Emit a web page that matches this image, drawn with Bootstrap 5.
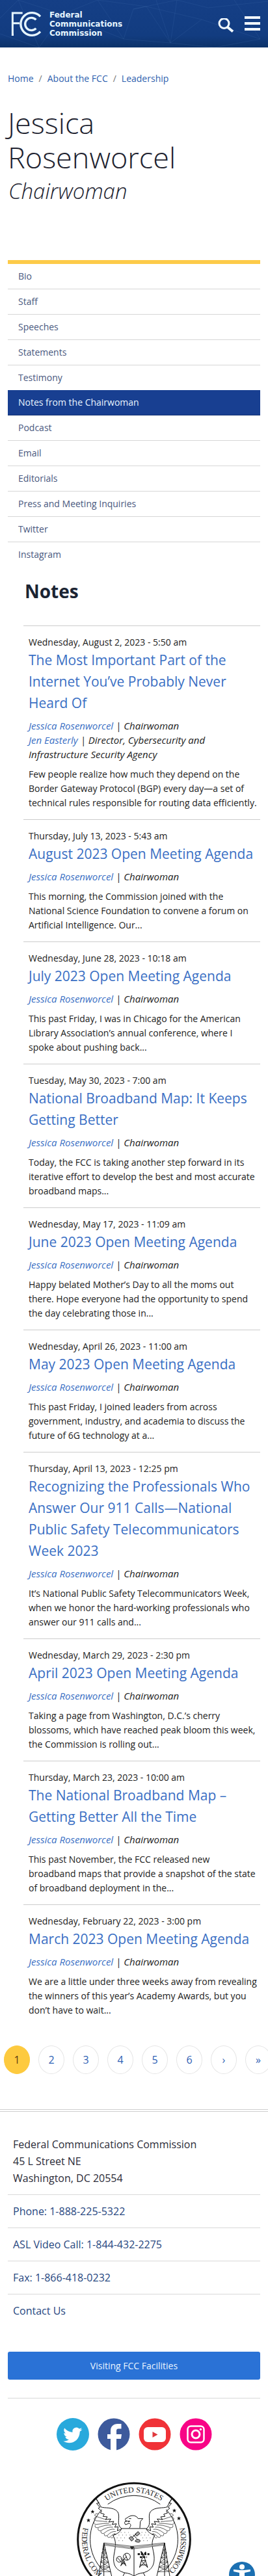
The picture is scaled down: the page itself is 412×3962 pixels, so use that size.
<!DOCTYPE html>
<html lang="en">
<head>
<meta charset="utf-8">
<meta name="viewport" content="width=device-width, initial-scale=1">
<title>Notes from the Chairwoman | Federal Communications Commission</title>
<link href="https://cdn.jsdelivr.net/npm/bootstrap@5.3.0/dist/css/bootstrap.min.css" rel="stylesheet">
<style>
body { font-family: "Open Sans", "Noto Sans", sans-serif; font-size: 14px; line-height: 22px; color: #212121; overflow-x: hidden; }
a { color: #3a6fc4; text-decoration: none; }
.site-header { height: 73px; background: linear-gradient(#153f86 0, #123c80 75%, #0c3269 100%); overflow: hidden; }
.header-web { inset: 0; width: 100%; height: 100%; }
.site-name { font: bold 12px/14px "DejaVu Sans", sans-serif; color: #e6f6ff; }
.icon-btn { border: 0; background: none; padding: 0; line-height: 0; }
.crumbs { font-size: 14px; padding-top: 37px; }
.crumbs a { color: #2f5fae; }
.crumbs li + li::before { content: "/"; color: #777; padding: 0 8px; }
h1 { font-weight: 300; font-size: 45px; line-height: 53px; color: #20222f; margin: 30px 0 0; }
.role { font-weight: 300; font-style: italic; font-size: 33px; line-height: 44px; color: #20222f; margin: 4px 0 84px; padding-left: 1px; }
.side-nav { border-top: 6px solid #fdcb49; }
.side-nav a { display: block; padding: 8px 16px; border-bottom: 1px solid #d6d6d6; color: #49587e; }
.side-nav li:last-child a { border-bottom-color: transparent; }
.side-nav a.before-active { border-bottom: 0; }
.side-nav a.active { background: #183f91; border-bottom-color: #123072; color: #e8f4ff; }
.notes { margin-left: 24px; }
.notes h2 { font-weight: 700; font-size: 28px; line-height: 38px; color: #1b2433; margin: 17px 0 34px; padding-left: 2px; }
.note { border-top: 1px solid #ccc; padding: 14px 5px 14px 8px; }
.note h3 { font-weight: 400; font-size: 21px; line-height: 33px; margin: 0 0 7px; }
.note .byline { font-style: italic; font-size: 15px; margin: 0 0 9px; }
.note .teaser { margin: 0; }
.pager { gap: 13px; padding-left: 6px; margin: 29px 0 54px; }
.pager .page-item .page-link { width: 40px; height: 44px; margin-left: 0; border-radius: 50%; border: 1px solid #e6e6e6; padding: 0; font-size: 16px; line-height: 42px; text-align: center; color: #2f62b5; }
.pager .active .page-link { background: #fdca3f; border-color: #fdca3f; color: #5b3b12; }
.site-footer { border-top: 4px double #cfcfcf; font-size: 16px; line-height: 26px; padding-top: 37px; }
.contact > * { border-bottom: 1px solid #d9d9d9; padding: 12px 8px; }
.contact > :first-child { padding-top: 0; }
.contact > :last-child { border-bottom: 0; }
.contact a { color: #27477f; display: block; }
.contact address { margin: 0; color: #2c2c38; }
.btn-visit { background: #2a72d6; border: 0; border-radius: 3px; color: #e8f4ff; font-size: 14px; line-height: 23px; padding: 10px; margin-top: 38px; }
.social { border-top: 1px solid #d9d9d9; margin-top: 28px; padding-top: 30px; gap: 13px; line-height: 0; }
.seal { margin-top: 48px; line-height: 0; }
.a11y { right: 20px; bottom: -18px; }
</style>
</head>
<body>
<header class="site-header position-relative">
  <svg class="header-web position-absolute" viewBox="0 0 412 73" preserveAspectRatio="none" fill="none" stroke="#4f7bb8" stroke-opacity=".18" aria-hidden="true">
    <path d="M0 28 28 0 96 22 60 73M28 0 60 73 0 52M96 22 190 60 150 0 96 22M190 60 205 14 272 0 262 66 225 10 310 30 262 66 330 73M190 60 262 66M272 0 320 12 412 2M310 30 400 60 330 73M360 0 400 60M205 14 225 10 150 0M262 66 240 0"/>
  </svg>
  <div class="position-relative d-flex align-items-start ps-3 pe-2 h-100">
    <a href="#" class="d-flex" aria-label="FCC home">
      <svg class="mt-3" width="48" height="42" viewBox="48 48 144 126" fill="none" stroke="#e6f6ff" stroke-width="10" aria-hidden="true">
        <path d="M58 165V60H104M58 107H90" stroke-width="9"/><path d="M53 165 63 153V165Z" fill="#e6f6ff" stroke="none"/>
        <path d="M186 76A52 52 0 1 0 186 146"/><path d="M166 91A29 29 0 1 0 166 131"/>
      </svg>
      <span class="site-name d-block mt-3 ms-2 ps-1">Federal<br>Communications<br>Commission</span>
    </a>
    <button class="icon-btn ms-auto mt-4" type="button" aria-label="Search">
      <svg class="mt-1" width="26" height="26" viewBox="0 0 26 26" fill="none" stroke="#f2faff"><circle cx="10.500" cy="8" r="7.500" stroke-width="3"/><path d="M15.500 13.500 24 20.500" stroke-width="4"/></svg>
    </button>
    <button class="icon-btn ms-3 mt-4 me-1" type="button" aria-label="Menu">
      <svg width="24" height="24" viewBox="0 0 24 24" fill="#f2faff"><path d="M0 1h24v4H0zM0 10h24v4H0zM0 19h24v4H0z"/></svg>
    </button>
  </div>
</header>

<main>
  <div class="container-fluid">
    <nav aria-label="Breadcrumb"><ol class="crumbs list-unstyled d-flex m-0">
      <li><a href="#">Home</a></li><li><a href="#">About the FCC</a></li><li><a href="#">Leadership</a></li>
    </ol></nav>
    <h1>Jessica Rosenworcel</h1>
    <p class="role">Chairwoman</p>

    <nav aria-label="Chairwoman">
      <ul class="side-nav list-unstyled m-0">
        <li><a href="#">Bio</a></li>
        <li><a href="#">Staff</a></li>
        <li><a href="#">Speeches</a></li>
        <li><a href="#">Statements</a></li>
        <li><a href="#" class="before-active">Testimony</a></li>
        <li><a href="#" class="active" aria-current="page">Notes from the Chairwoman</a></li>
        <li><a href="#">Podcast</a></li>
        <li><a href="#">Email</a></li>
        <li><a href="#">Editorials</a></li>
        <li><a href="#">Press and Meeting Inquiries</a></li>
        <li><a href="#">Twitter</a></li>
        <li><a href="#">Instagram</a></li>
      </ul>
    </nav>

    <section class="notes">
      <h2>Notes</h2>
      <article class="note"><time>Wednesday, August 2, 2023 - 5:50 am</time>
        <h3><a href="#">The Most Important Part of the Internet You’ve Probably Never Heard Of</a></h3>
        <p class="byline"><a href="#">Jessica Rosenworcel</a> | Chairwoman<br><a href="#">Jen Easterly</a> | Director, Cybersecurity and Infrastructure Security Agency</p>
        <p class="teaser">Few people realize how much they depend on the Border Gateway Protocol (BGP) every day—a set of technical rules responsible for routing data efficiently.</p></article>
      <article class="note"><time>Thursday, July 13, 2023 - 5:43 am</time>
        <h3><a href="#">August 2023 Open Meeting Agenda</a></h3>
        <p class="byline"><a href="#">Jessica Rosenworcel</a> | Chairwoman</p>
        <p class="teaser">This morning, the Commission joined with the National Science Foundation to convene a forum on Artificial Intelligence. Our...</p></article>
      <article class="note"><time>Wednesday, June 28, 2023 - 10:18 am</time>
        <h3><a href="#">July 2023 Open Meeting Agenda</a></h3>
        <p class="byline"><a href="#">Jessica Rosenworcel</a> | Chairwoman</p>
        <p class="teaser">This past Friday, I was in Chicago for the American Library Association’s annual conference, where I spoke about pushing back...</p></article>
      <article class="note"><time>Tuesday, May 30, 2023 - 7:00 am</time>
        <h3><a href="#">National Broadband Map: It Keeps Getting Better</a></h3>
        <p class="byline"><a href="#">Jessica Rosenworcel</a> | Chairwoman</p>
        <p class="teaser">Today, the FCC is taking another step forward in its iterative effort to develop the best and most accurate broadband maps...</p></article>
      <article class="note"><time>Wednesday, May 17, 2023 - 11:09 am</time>
        <h3><a href="#">June 2023 Open Meeting Agenda</a></h3>
        <p class="byline"><a href="#">Jessica Rosenworcel</a> | Chairwoman</p>
        <p class="teaser">Happy belated Mother’s Day to all the moms out there. Hope everyone had the opportunity to spend the day celebrating those in...</p></article>
      <article class="note"><time>Wednesday, April 26, 2023 - 11:00 am</time>
        <h3><a href="#">May 2023 Open Meeting Agenda</a></h3>
        <p class="byline"><a href="#">Jessica Rosenworcel</a> | Chairwoman</p>
        <p class="teaser">This past Friday, I joined leaders from across government, industry, and academia to discuss the future of 6G technology at a...</p></article>
      <article class="note"><time>Thursday, April 13, 2023 - 12:25 pm</time>
        <h3><a href="#">Recognizing the Professionals Who Answer Our 911 Calls—National Public Safety Telecommunicators Week 2023</a></h3>
        <p class="byline"><a href="#">Jessica Rosenworcel</a> | Chairwoman</p>
        <p class="teaser">It’s National Public Safety Telecommunicators Week, when we honor the hard-working professionals who answer our 911 calls and...</p></article>
      <article class="note"><time>Wednesday, March 29, 2023 - 2:30 pm</time>
        <h3><a href="#">April 2023 Open Meeting Agenda</a></h3>
        <p class="byline"><a href="#">Jessica Rosenworcel</a> | Chairwoman</p>
        <p class="teaser">Taking a page from Washington, D.C.’s cherry blossoms, which have reached peak bloom this week, the Commission is rolling out...</p></article>
      <article class="note"><time>Thursday, March 23, 2023 - 10:00 am</time>
        <h3><a href="#">The National Broadband Map – Getting Better All the Time</a></h3>
        <p class="byline"><a href="#">Jessica Rosenworcel</a> | Chairwoman</p>
        <p class="teaser">This past November, the FCC released new broadband maps that provide a snapshot of the state of broadband deployment in the...</p></article>
      <article class="note"><time>Wednesday, February 22, 2023 - 3:00 pm</time>
        <h3><a href="#">March 2023 Open Meeting Agenda</a></h3>
        <p class="byline"><a href="#">Jessica Rosenworcel</a> | Chairwoman</p>
        <p class="teaser">We are a little under three weeks away from revealing the winners of this year’s Academy Awards, but you don’t have to wait...</p></article>
    </section>
  </div>

  <nav aria-label="Pages" class="overflow-hidden">
    <ul class="pager pagination">
      <li class="page-item active" aria-current="page"><a class="page-link" href="#">1</a></li>
      <li class="page-item"><a class="page-link" href="#">2</a></li>
      <li class="page-item"><a class="page-link" href="#">3</a></li>
      <li class="page-item"><a class="page-link" href="#">4</a></li>
      <li class="page-item"><a class="page-link" href="#">5</a></li>
      <li class="page-item"><a class="page-link" href="#">6</a></li>
      <li class="page-item"><a class="page-link" href="#" aria-label="Next">›</a></li>
      <li class="page-item"><a class="page-link" href="#" aria-label="Last">»</a></li>
    </ul>
  </nav>
</main>

<footer class="site-footer">
  <div class="container-fluid">
    <div class="contact">
      <address>Federal Communications Commission<br>45 L Street NE<br>Washington, DC 20554</address>
      <a href="#">Phone: 1-888-225-5322</a>
      <a href="#">ASL Video Call: 1-844-432-2275</a>
      <a href="#">Fax: 1-866-418-0232</a>
      <a href="#">Contact Us</a>
    </div>
    <a href="#" class="btn btn-visit w-100">Visiting FCC Facilities</a>
    <div class="social d-flex justify-content-center">
      <a href="#" aria-label="Twitter"><svg width="50" height="50" viewBox="0 0 50 50"><circle cx="25" cy="25" r="25" fill="#28a9dc"/><path fill="#fff" d="M39.500 17.200c-1.200.6-2.400.9-3.500 1 1.300-.8 2.100-1.900 2.600-3.300-1.200.7-2.400 1.200-3.800 1.500a6.100 6.100 0 0 0-10.300 5.500c-5-.2-9.400-2.600-12.300-6.300-1.600 2.700-.9 6.200 1.800 8-1 0-1.900-.2-2.700-.7.100 3.200 2.100 5.300 4.700 6-.9.200-1.700.2-2.600.1.700 2.400 2.900 4.100 5.500 4.100-2.500 2-5.400 2.800-8.600 2.500 9.700 6.200 24.900 1.700 25.500-14.800 1.500-.9 2.800-2.200 3.700-3.600z"/></svg></a>
      <a href="#" aria-label="Facebook"><svg width="50" height="50" viewBox="0 0 50 50"><circle cx="25" cy="25" r="24.500" fill="#3d5a9c"/><path fill="#fff" d="M20 50V32h-5v-7h5v-5c0-7 4-11 11-11h5.500v7.500H32c-2 0-3 1-3 3V25h8l-1 7h-7v18z"/></svg></a>
      <a href="#" aria-label="YouTube"><svg width="50" height="50" viewBox="0 0 50 50"><circle cx="25" cy="25" r="24.500" fill="#f03237"/><rect x="8" y="14" width="34" height="23" rx="6" fill="#fff"/><path fill="#e0393c" d="m21.500 21 8 4.500-8 4.500z"/></svg></a>
      <a href="#" aria-label="Instagram"><svg width="50" height="50" viewBox="0 0 50 50"><circle cx="25" cy="25" r="24.500" fill="#f80486"/><g fill="none" stroke="#fff"><rect x="12.500" y="12.500" width="25" height="25" rx="5" stroke-width="2.500"/><circle cx="25" cy="25" r="6" stroke-width="3"/></g><circle cx="32.500" cy="17.500" r="1.700" fill="#fff"/></svg></a>
    </div>
    <div class="seal text-center">
      <svg width="176" height="145" viewBox="23 20 528 435" role="img" aria-label="FCC seal" fill="none" stroke="#111" stroke-width="3">
        <defs>
          <path id="arcTop" d="M70 286A217 217 0 0 1 504 286"/>
          <path id="arcLow" d="M96 140A240 240 0 1 0 478 140"/>
          <path id="star" d="m0-9 2.500 6H9L4 1l2 8-6-5-6 5 2-8-5-4h6.500z" fill="#111" stroke="none"/>
        </defs>
        <circle cx="287" cy="286" r="259" stroke-width="9"/>
        <path d="M166 124A202 202 0 0 1 408 124M430 143A202 202 0 0 1 430 429M144 429A202 202 0 0 1 144 143"/>
        <g fill="#222" stroke="none" font-family="Liberation Serif, serif" font-size="36">
          <text text-anchor="middle"><textPath href="#arcTop" startOffset="50%">UNITED STATES</textPath></text>
          <text><textPath href="#arcLow" startOffset="9.500%">FEDERAL COM</textPath></text>
          <text text-anchor="end"><textPath href="#arcLow" startOffset="90.500%">COMMISSION</textPath></text>
        </g>
        <use href="#star" x="96" y="158"/><use href="#star" x="77" y="198"/><use href="#star" x="473" y="153"/><use href="#star" x="494" y="189"/>
        <g id="wing">
          <path d="M112 96 134 136C150 144 190 134 211 158 224 176 210 205 219 224Q224 234 230 236C226 252 214 258 208 266L196 260" fill="#fff"/>
          <path d="M112 100 126 118 114 120 130 138 122 142 138 156 132 164 150 170 144 180 164 182 156 194 180 192 170 206 194 203 186 217 206 214 198 230 214 228 210 246 226 240"/>
          <path stroke-width="2" d="M120 166Q96 172 112 180Q150 192 160 196M112 182Q94 192 112 200Q145 202 164 205M104 202Q96 214 112 217Q148 212 172 212M108 220Q104 234 120 232Q155 218 182 220M122 234Q118 248 134 246Q166 226 190 230M134 248Q134 262 148 258Q178 234 198 240M150 260Q148 274 164 268Q184 246 204 250M164 270Q166 282 178 274Q192 258 204 262M180 276Q186 284 194 272"/>
        </g>
        <use href="#wing" transform="matrix(-1 0 0 1 574 0)"/>
        <path d="M265 234C276 222 272 214 264 212L248 218C240 208 244 202 254 202 244 196 244 188 254 188 270 172 296 172 306 190L328 190 316 204 314 234" fill="#fff"/><path d="M264 190h10M246 202h22l-8 4"/>
        <path fill="#fff" d="M230 236H342C350 250 362 260 382 268 364 300 372 320 378 350 386 400 372 428 330 440Q300 444 287 456 274 444 244 440C200 428 186 400 196 350 202 320 206 292 190 268 212 260 224 250 230 236Z"/>
        <g stroke="#555" stroke-dasharray="3 14" stroke-width="3"><path d="M226 254H262M216 266H270M208 279H258M216 292H250M322 254H346M318 266H360M326 279H366M330 292H358"/></g>
        <path d="m264 280 10-8 12 12-10 10zM292 262l14-12 8 9-14 12zM277 278l20-17M284 265l16 18M292 294q8-14 22-4c6 8-8 14-22 4z" fill="#aaa"/>
        <path fill="#fff" stroke-width="2" d="M148 302 278 318 428 302V312L280 330 148 312ZM148 307 278 324 428 307"/><path d="M270 320h16l-8 12z" fill="#333"/><path d="M287 324V456"/>
        <g id="tower" stroke-width="2"><path stroke-width="3" d="M148 302 124 456M148 302 184 456M148 302V456"/><path d="M142 330 156 334M138 348 160 350M136 368 164 370M132 390 169 392M129 412 174 414M126 434 179 436M142 330 160 350 136 368 169 392 129 412 179 436M156 334 138 348 164 370 132 390 174 414 126 434"/></g>
        <use href="#tower" transform="matrix(-1 0 0 1 576 0)"/>
        <g><circle cx="219" cy="378" r="13"/><circle cx="254" cy="366" r="16"/><path d="m210 370 20 22M246 354l12 28M225 374l10 9 18-18M238 378 226 408M238 378 250 408M229 398h18M234 386l16 22M242 386l-16 22"/></g>
        <g><path d="M330 354 312 416M330 354 350 416M320 384h22M314 404h34M320 384 350 416M342 384 312 416"/><path stroke-width="8" stroke-dasharray="10 5" d="M304 354h54M314 368h32"/><path stroke-width="6" d="m318 342 8 8M342 344l-6 8"/></g>
        <path d="M244 440l-8 16M330 440l8 16"/>
      </svg>
    </div>
  </div>
</footer>
<button class="a11y icon-btn position-fixed" type="button" aria-label="Accessibility options">
  <svg width="40" height="40" viewBox="0 0 40 40"><circle cx="20" cy="20" r="20" fill="#1c70b2"/><circle cx="20" cy="8" r="4" fill="#fff"/><path fill="#fff" d="m7 12 10 1h6l10-1v3l-9 2v6l3 12h-3l-4-11-4 11h-3l3-12v-6l-9-2z"/></svg>
</button>
<script src="https://cdn.jsdelivr.net/npm/bootstrap@5.3.0/dist/js/bootstrap.bundle.min.js"></script>
</body>
</html>
